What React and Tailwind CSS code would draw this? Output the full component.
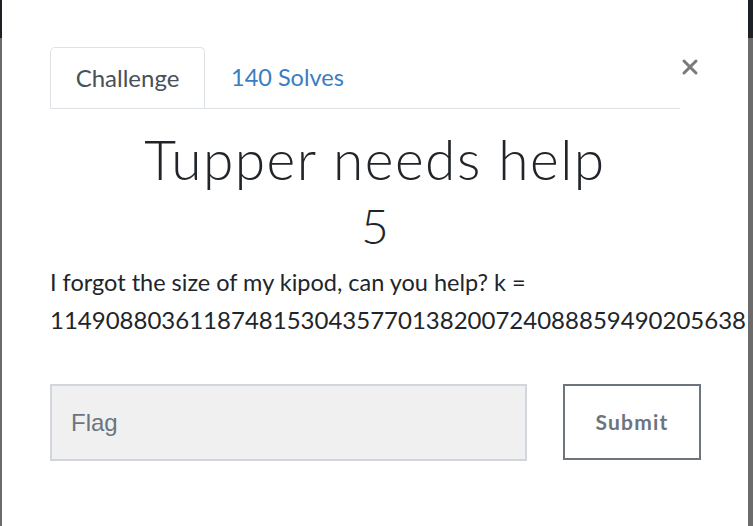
import { X } from "lucide-react";

const K =
  "114908803611874815304357701382007240888594902056381427319806453046126485337601389728736284910572836491028374650192837465091823746501928374650918273645019283746";

export default function App() {
  return (
    <div className="relative w-[753px] h-[526px] overflow-hidden bg-[#6b6b6b] font-['Lato',sans-serif]">
      {/* page behind the modal */}
      <div className="h-[38px] bg-[#1d2024]" />

      {/* modal */}
      <div className="absolute left-[2px] top-0 w-[746px] h-[526px] bg-white overflow-hidden">
        <div className="pl-12 pt-[47px]">
          <div className="flex items-start">
            <div className="flex w-[630px] border-b border-[#dee2e6]">
              <div className="h-[61px] w-[155px] flex items-center justify-center border border-[#dee2e6] border-b-0 rounded-t-[5px] bg-white -mb-px text-[24px] text-[#495057]">
                Challenge
              </div>
              <div className="h-[61px] pl-[26px] flex items-center text-[23.5px] text-[#3b7dc0]">
                140 Solves
              </div>
            </div>
            <button className="-ml-[2px] mt-[8px] text-[#7a7a7a]">
              <X size={24} strokeWidth={3} />
            </button>
          </div>

          <div className="w-[650px]">
            <h1 className="mt-[18px] text-center text-[55px] leading-[64px] font-light tracking-[1.5px] text-[#212529]">
              Tupper needs help
            </h1>
            <div className="mt-[8px] text-center text-[48px] leading-[54px] font-light text-[#212529]">5</div>
          </div>

          <p className="mt-[10px] text-[23.5px] leading-[38px] text-[#212529] whitespace-nowrap">
            I forgot the size of my kipod, can you help? k =
            <br />
            <span className="text-[24px]">{K}</span>
          </p>

          <div className="mt-[45px] flex gap-[36px]">
            <input
              placeholder="Flag"
              className="w-[477px] h-[77px] bg-[#f0f0f0] border-2 border-[#d1d6dc] px-[19px] text-[24px] font-['Liberation_Sans',sans-serif] placeholder:text-[#6c757d] outline-none"
            />
            <button className="w-[138px] h-[76px] border-2 border-[#6c757d] text-[21px] font-bold tracking-[1.2px] text-[#6c757d]">
              Submit
            </button>
          </div>
        </div>
      </div>
    </div>
  );
}
